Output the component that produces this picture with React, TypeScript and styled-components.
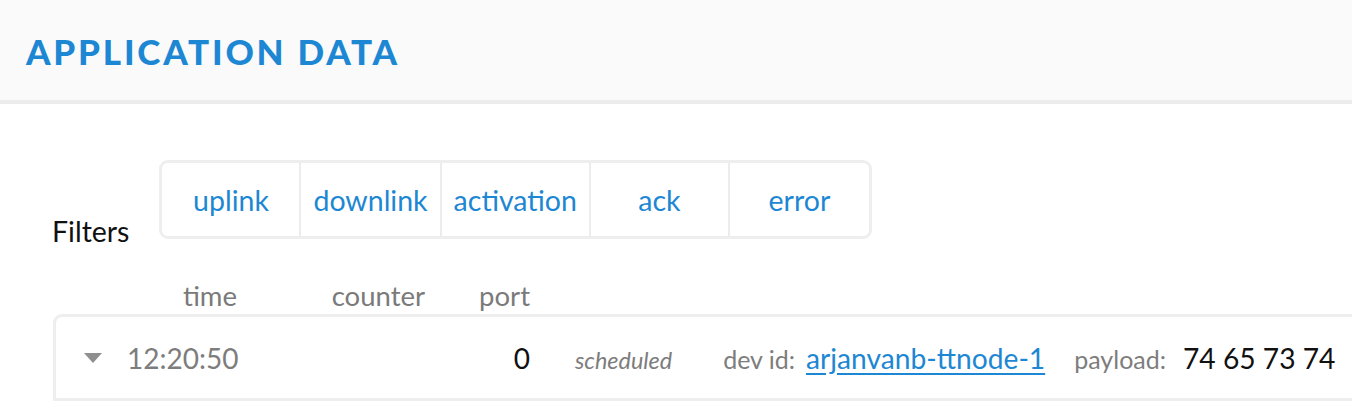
import styled, { createGlobalStyle } from "styled-components";

const GlobalStyle = createGlobalStyle`
  body {
    margin: 0;
    background: #ffffff;
    font-family: Lato, "Open Sans", sans-serif;
  }
`;

const filters = ["uplink", "downlink", "activation", "ack", "error"];

const App = () => {
  return (
    <Page>
      <GlobalStyle />
      <Header>
        <Title>Application Data</Title>
      </Header>
      <Content>
        <FilterRow>
          <FilterLabel>Filters</FilterLabel>
          <FilterGroup>
            {filters.map((f) => (
              <FilterBtn key={f}>{f}</FilterBtn>
            ))}
          </FilterGroup>
        </FilterRow>
        <ColumnHeads>
          <span />
          <HeadCell>time</HeadCell>
          <HeadCell>counter</HeadCell>
          <HeadCell>port</HeadCell>
        </ColumnHeads>
        <Card>
          <Row>
            <Toggle>
              <svg width="20" height="12" viewBox="0 0 20 12">
                <path d="M1 1 L19 1 L10 11 Z" fill="#8f8f8f" />
              </svg>
            </Toggle>
            <TimeCell>12:20:50</TimeCell>
            <span />
            <PortCell>0</PortCell>
            <Details>
              <Status>scheduled</Status>
              <Field $gap={11} $left={51}>
                <FieldKey>dev id:</FieldKey>
                <DevLink href="#">arjanvanb-ttnode-1</DevLink>
              </Field>
              <Field $gap={17} $left={29}>
                <FieldKey>payload:</FieldKey>
                <Payload>74 65 73 74</Payload>
              </Field>
            </Details>
          </Row>
        </Card>
      </Content>
    </Page>
  );
};

export default App;

const Page = styled.div`
  width: 1352px;
  height: 406px;
  overflow: hidden;
`;

const Header = styled.header`
  height: 100px;
  background: #fafafa;
  border-bottom: 4px solid #ececec;
  display: flex;
  align-items: center;
  padding-left: 26px;
`;

const Title = styled.h1`
  margin: 0;
  margin-top: 2px;
  font-family: Lato, sans-serif;
  font-weight: 900;
  font-size: 35px;
  letter-spacing: 2.8px;
  text-transform: uppercase;
  color: #1d87d3;
`;

const Content = styled.div`
  padding: 56px 0 0 52px;
`;

const FilterRow = styled.div`
  display: flex;
  align-items: flex-end;
  gap: 30px;
`;

const FilterLabel = styled.span`
  font-size: 28.5px;
  color: #111;
  line-height: 1;
  margin-bottom: -6px;
`;

const FilterGroup = styled.div`
  display: flex;
  height: 73px;
  border: 3px solid #eeeeee;
  border-radius: 9px;
  overflow: hidden;
`;

const FilterBtn = styled.button`
  min-width: 139px;
  padding: 0 12px;
  border: none;
  border-right: 2px solid #ececec;
  background: #fff;
  font-family: Lato, sans-serif;
  font-size: 28.5px;
  color: #1d87d3;
  cursor: pointer;
  &:last-child {
    border-right: none;
  }
`;

const grid = `
  display: grid;
  grid-template-columns: 71px 110px 188px 105px 1fr;
  align-items: center;
`;

const ColumnHeads = styled.div`
  ${grid}
  padding-left: 4px;
  margin-top: 37px;
  height: 38px;
`;

const HeadCell = styled.span`
  text-align: right;
  font-size: 27.5px;
  color: #7a7a7a;
`;

const Card = styled.div`
  border: 3px solid #eeeeee;
  border-bottom: none;
  border-radius: 9px 9px 0 0;
  margin-left: 1px;
  margin-right: -20px;
`;

const Row = styled.div`
  ${grid}
  height: 81px;
  border-bottom: 3px solid #eeeeee;
`;

const Toggle = styled.span`
  display: flex;
  justify-content: center;
  padding-left: 2px;
`;

const TimeCell = styled.span`
  text-align: right;
  font-size: 28px;
  color: #7d7d7d;
`;

const PortCell = styled.span`
  text-align: right;
  font-size: 28px;
  color: #111;
`;

const Details = styled.div`
  display: flex;
  align-items: baseline;
  padding-left: 45px;
`;

const Status = styled.span`
  font-size: 23.4px;
  font-style: italic;
  color: #7d7d7d;
`;

const Field = styled.span<{ $gap: number; $left: number }>`
  display: flex;
  align-items: baseline;
  gap: ${(p) => p.$gap}px;
  margin-left: ${(p) => p.$left}px;
`;

const FieldKey = styled.span`
  font-size: 25px;
  color: #7d7d7d;
`;

const DevLink = styled.a`
  font-size: 28.2px;
  color: #1d87d3;
  text-decoration: underline;
  text-underline-offset: 4px;
`;

const Payload = styled.span`
  font-size: 28.2px;
  color: #111;
`;
